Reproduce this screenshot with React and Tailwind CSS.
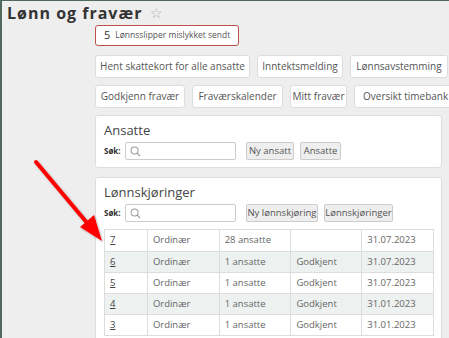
import React from "react";

const Search = () => (
  <svg width="11" height="11" viewBox="0 0 12 12" className="shrink-0">
    <circle cx="5" cy="5" r="3.8" fill="none" stroke="#9a9a9a" strokeWidth="1.1" />
    <line x1="7.8" y1="7.8" x2="11" y2="11" stroke="#9a9a9a" strokeWidth="1.2" />
  </svg>
);

const Btn = ({ children, w }) => (
  <div
    className="h-[23px] shrink-0 flex items-center justify-center bg-white border border-[#dddddd] rounded-[3px] text-[10px] text-[#555] whitespace-nowrap"
    style={{ width: w }}
  >
    {children}
  </div>
);

const SmallBtn = ({ children, w }) => (
  <div
    className="h-[18px] shrink-0 flex items-center justify-center bg-[#eeeeee] border border-[#cccccc] rounded-[2px] text-[9.5px] text-[#555] whitespace-nowrap"
    style={{ width: w }}
  >
    {children}
  </div>
);

const SearchRow = ({ buttons }) => (
  <div className="flex items-center h-[18px]">
    <span className="text-[8px] font-bold text-[#333] w-[21px]">Søk:</span>
    <div className="w-[111px] h-[18px] border border-[#cccccc] rounded-[2px] bg-white flex items-center pl-[4px]">
      <Search />
    </div>
    <div className="flex gap-[6px] ml-[10px]">{buttons}</div>
  </div>
);

const rows = [
  ["7", "Ordinær", "28 ansatte", "", "31.07.2023"],
  ["6", "Ordinær", "1 ansatte", "Godkjent", "31.07.2023"],
  ["5", "Ordinær", "1 ansatte", "Godkjent", "31.07.2023"],
  ["4", "Ordinær", "1 ansatte", "Godkjent", "31.01.2023"],
  ["3", "Ordinær", "1 ansatte", "Godkjent", "31.01.2023"],
];

const colW = [43, 72, 72, 71, 71];

export default function App() {
  return (
    <div className="w-[449px] h-[338px] overflow-hidden bg-[#eeeeee] border-t border-l-2 border-[#50695f] relative font-['Open_Sans',sans-serif]">
      <div className="flex items-center h-[24px] pl-[5px]">
        <span className="text-[16px] font-bold tracking-[1px] text-[#333] leading-none">Lønn og fravær</span>
        <span className="ml-[8px] text-[14px] text-[#aaa] leading-none">☆</span>
      </div>
      <div className="ml-[93px] w-[347px]">
        <div className="w-[144px] h-[21px] border border-[#c0504d] rounded-[3px] bg-white flex items-center pl-[8px] whitespace-nowrap">
          <span className="text-[11px] text-[#333]">5</span>
          <span className="text-[8.5px] text-[#555] ml-[5px]">Lønnsslipper mislykket sendt</span>
        </div>
        <div className="flex gap-[7px] mt-[9px]">
          <Btn w={155}>Hent skattekort for alle ansatte</Btn>
          <Btn w={86}>Inntektsmelding</Btn>
          <Btn w={98}>Lønnsavstemming</Btn>
        </div>
        <div className="flex gap-[7px] mt-[7px]">
          <Btn w={90}>Godkjenn fravær</Btn>
          <Btn w={91}>Fraværskalender</Btn>
          <Btn w={57}>Mitt fravær</Btn>
          <div className="h-[23px] shrink-0 flex items-center pl-[8px] w-[104px] bg-white border border-[#dddddd] rounded-[3px] text-[10px] text-[#555] whitespace-nowrap">
            Oversikt timebank
          </div>
        </div>
        <div className="mt-[7px] h-[53px] bg-white border border-[#dddddd] rounded-[3px] pl-[8px] pt-[5px]">
          <div className="text-[13px] text-[#444] leading-[18px]">Ansatte</div>
          <div className="mt-[3px]">
            <SearchRow
              buttons={[
                <SmallBtn key="a" w={48}>Ny ansatt</SmallBtn>,
                <SmallBtn key="b" w={41}>Ansatte</SmallBtn>,
              ]}
            />
          </div>
        </div>
        <div className="mt-[9px] h-[200px] bg-white border border-[#dddddd] rounded-[3px] pl-[8px] pt-[5px]">
          <div className="text-[13px] text-[#444] leading-[18px]">Lønnskjøringer</div>
          <div className="mt-[3px]">
            <SearchRow
              buttons={[
                <SmallBtn key="a" w={72}>Ny lønnskjøring</SmallBtn>,
                <SmallBtn key="b" w={69}>Lønnskjøringer</SmallBtn>,
              ]}
            />
          </div>
          <div className="mt-[7px] w-[330px] border border-[#dddddd]">
            {rows.map((r, i) => (
              <div
                key={i}
                className={`flex h-[21px] ${i % 2 === 1 ? "bg-[#edf1f0]" : "bg-white"} ${i > 0 ? "border-t border-[#dddddd]" : ""}`}
              >
                {r.map((c, j) => (
                  <div
                    key={j}
                    className={`flex items-center pl-[5px] text-[9.5px] text-[#666] ${j < 4 ? "border-r border-[#dddddd]" : ""}`}
                    style={{ width: colW[j] }}
                  >
                    {j === 0 ? <span className="underline text-[#444]">{c}</span> : c}
                  </div>
                ))}
              </div>
            ))}
          </div>
        </div>
      </div>
      <svg className="absolute left-0 top-0 pointer-events-none" width="449" height="338">
        <defs>
          <filter id="sh" x="-20%" y="-20%" width="140%" height="140%">
            <feDropShadow dx="1" dy="1" stdDeviation="1" floodColor="#000" floodOpacity="0.3" />
          </filter>
        </defs>
        <g filter="url(#sh)">
          <line x1="34" y1="161" x2="86" y2="223" stroke="#ff0000" strokeWidth="4" strokeLinecap="round" />
          <polygon points="100,240 78,226 92,214" fill="#ff0000" />
        </g>
      </svg>
    </div>
  );
}
